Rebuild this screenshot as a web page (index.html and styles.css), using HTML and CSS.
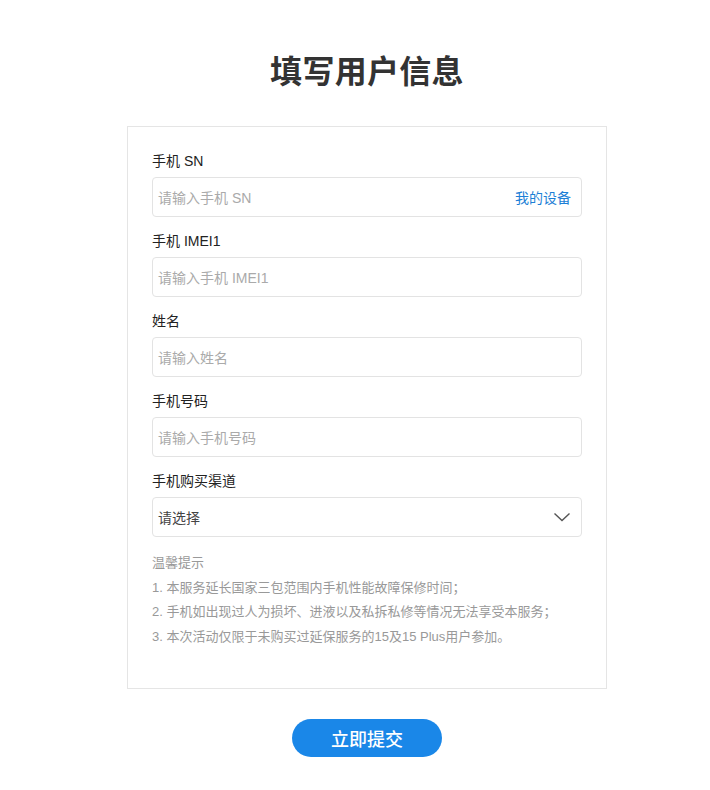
FILE: index.html
```html
<!DOCTYPE html>
<html lang="zh-CN">
<head>
<meta charset="utf-8">
<title>填写用户信息</title>
<link rel="stylesheet" href="styles.css">
</head>
<body>
<div class="page">
  <h1 class="title">填写用户信息</h1>
  <div class="card">
    <div class="field">
      <div class="label">手机 SN</div>
      <div class="input">
        <span class="placeholder">请输入手机 SN</span>
        <span class="link">我的设备</span>
      </div>
    </div>
    <div class="field">
      <div class="label">手机 IMEI1</div>
      <div class="input"><span class="placeholder">请输入手机 IMEI1</span></div>
    </div>
    <div class="field">
      <div class="label">姓名</div>
      <div class="input"><span class="placeholder">请输入姓名</span></div>
    </div>
    <div class="field">
      <div class="label">手机号码</div>
      <div class="input"><span class="placeholder">请输入手机号码</span></div>
    </div>
    <div class="field">
      <div class="label">手机购买渠道</div>
      <div class="input select">
        <span class="value">请选择</span>
        <svg class="chevron" width="18" height="10" viewBox="0 0 18 10"><path d="M1.5 1.5 L9 8.5 L16.5 1.5" fill="none" stroke="#555" stroke-width="1.4"/></svg>
      </div>
    </div>
    <div class="tips">
      <div>温馨提示</div>
      <div>1. 本服务延长国家三包范围内手机性能故障保修时间；</div>
      <div>2. 手机如出现过人为损坏、进液以及私拆私修等情况无法享受本服务；</div>
      <div>3. 本次活动仅限于未购买过延保服务的15及15 Plus用户参加。</div>
    </div>
  </div>
  <button class="submit">立即提交</button>
</div>
</body>
</html>
```
FILE: styles.css
```css
* { box-sizing: border-box; }
body {
  margin: 0;
  background: #fff;
  font-family: "Liberation Sans", "Noto Sans CJK SC", sans-serif;
  color: #333;
}
.page {
  display: flex;
  flex-direction: column;
  align-items: center;
  padding-top: 50px;
  padding-left: 24px;
}
.title {
  margin: 0;
  font-size: 32px;
  line-height: 44px;
  font-weight: bold;
  color: #333;
  letter-spacing: 0.3px;
}
.card {
  margin-top: 32px;
  width: 480px;
  border: 1px solid #e5e5e5;
  padding: 24px 24px 39px;
}
.field { margin-bottom: 14px; }
.label {
  font-size: 14px;
  line-height: 20px;
  color: #222;
  margin-bottom: 6px;
}
.input {
  height: 40px;
  border: 1px solid #e3e3e3;
  border-radius: 4px;
  display: flex;
  align-items: center;
  justify-content: space-between;
  padding: 0 10px 0 5px;
  font-size: 14px;
}
.placeholder { color: #aaa; }
.link { color: #1c7fd6; }
.value { color: #444; }
.select { padding-right: 10px; }
.tips {
  margin-top: 4px;
  font-size: 13px;
  line-height: 24.5px;
  color: #999;
}
.submit {
  margin-top: 30px;
  width: 150px;
  height: 38px;
  border: none;
  border-radius: 19px;
  background: #1a87e8;
  color: #fff;
  font-family: "Liberation Sans", "Noto Sans CJK SC", sans-serif;
  font-size: 18px;
  font-weight: 500;
}
```
